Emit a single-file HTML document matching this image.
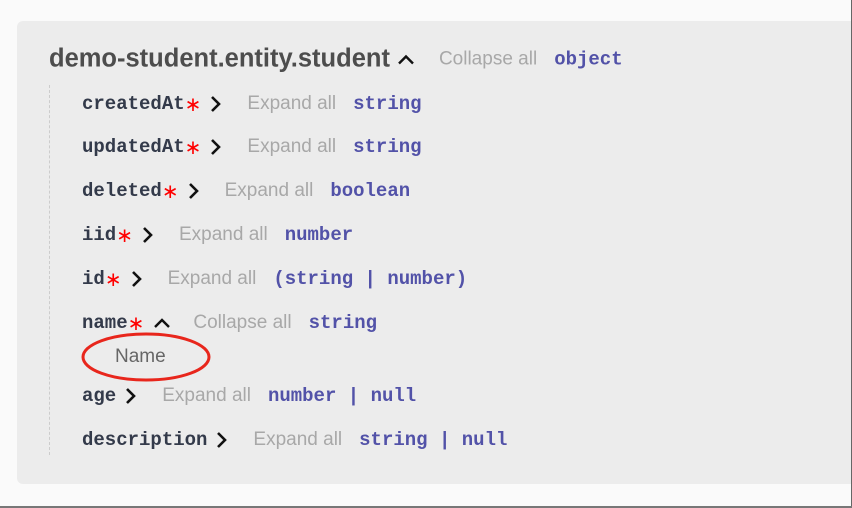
<!DOCTYPE html>
<html><head><style>
body{margin:0;width:852px;height:508px;background:#fafafa;position:relative;overflow:hidden;font-family:"Liberation Sans",sans-serif}
.panel{position:absolute;left:17px;top:21px;width:834px;height:463px;background:#ececec;border-radius:6px 0 0 6px}
.rb{position:absolute;right:0;top:0;width:1px;height:508px;background:#666}
.bb{position:absolute;left:0;bottom:0;width:852px;height:2px;background:#777}
.vl{position:absolute;left:49px;top:85px;height:370px;border-left:1px dashed #ccc}
.row{position:absolute;left:82px;white-space:nowrap;display:flex;align-items:center;height:24px;transform:translateY(-50%);margin-top:1px}
.k{font-family:"Liberation Mono",monospace;font-weight:bold;font-size:19px;color:#333a4a}
.r{color:#f00;font-family:"DejaVu Sans",sans-serif;font-weight:normal;font-size:20px}
.t{font-family:"Liberation Mono",monospace;font-weight:bold;font-size:19px;color:#5252a8}
.g{color:#a8a8a8;font-size:19px;margin:0 17px 0 25px}
.ch{display:inline-block;width:12px;height:18px;margin-left:9px}
.title{position:absolute;left:49px;top:59px;transform:translateY(-50%);font-size:25.5px;font-weight:bold;color:#4d4d4d;display:flex;align-items:center;white-space:nowrap}
</style></head><body>
<div class="panel"></div>
<div class="rb"></div><div class="bb"></div>
<div class="vl"></div>
<div class="title">demo-student.entity.student<svg class="ch" style="width:18px;margin-left:7px" viewBox="0 0 18 18"><path d="M2 13 L9 6 L16 13" fill="none" stroke="#111" stroke-width="2.4"/></svg><span class="g" style="font-weight:normal;margin-left:24px">Collapse all</span><span class="t">object</span></div>

<div class="row" style="top:103px"><span class="k">createdAt</span><span class="r">∗</span><svg class="ch" viewBox="0 0 12 18"><path d="M2 2 L9 9 L2 16" fill="none" stroke="#111" stroke-width="2.6"/></svg><span class="g">Expand all</span><span class="t">string</span></div>
<div class="row" style="top:146px"><span class="k">updatedAt</span><span class="r">∗</span><svg class="ch" viewBox="0 0 12 18"><path d="M2 2 L9 9 L2 16" fill="none" stroke="#111" stroke-width="2.6"/></svg><span class="g">Expand all</span><span class="t">string</span></div>
<div class="row" style="top:190px"><span class="k">deleted</span><span class="r">∗</span><svg class="ch" viewBox="0 0 12 18"><path d="M2 2 L9 9 L2 16" fill="none" stroke="#111" stroke-width="2.6"/></svg><span class="g">Expand all</span><span class="t">boolean</span></div>
<div class="row" style="top:234px"><span class="k">iid</span><span class="r">∗</span><svg class="ch" viewBox="0 0 12 18"><path d="M2 2 L9 9 L2 16" fill="none" stroke="#111" stroke-width="2.6"/></svg><span class="g">Expand all</span><span class="t">number</span></div>
<div class="row" style="top:278px"><span class="k">id</span><span class="r">∗</span><svg class="ch" viewBox="0 0 12 18"><path d="M2 2 L9 9 L2 16" fill="none" stroke="#111" stroke-width="2.6"/></svg><span class="g">Expand all</span><span class="t">(string | number)</span></div>
<div class="row" style="top:322px"><span class="k">name</span><span class="r">∗</span><svg class="ch" style="width:18px" viewBox="0 0 18 18"><path d="M2 13 L9 6 L16 13" fill="none" stroke="#111" stroke-width="2.4"/></svg><span class="g" style="margin-left:22px">Collapse all</span><span class="t">string</span></div>
<div style="position:absolute;left:115px;top:346px;font-size:19px;color:#666">Name</div>
<svg style="position:absolute;left:80px;top:330px" width="134" height="54"><ellipse cx="66" cy="27" rx="63" ry="23" fill="none" stroke="#e8261c" stroke-width="3"/></svg>
<div class="row" style="top:395px"><span class="k">age</span><svg class="ch" viewBox="0 0 12 18"><path d="M2 2 L9 9 L2 16" fill="none" stroke="#111" stroke-width="2.6"/></svg><span class="g">Expand all</span><span class="t">number | null</span></div>
<div class="row" style="top:439px"><span class="k">description</span><svg class="ch" viewBox="0 0 12 18"><path d="M2 2 L9 9 L2 16" fill="none" stroke="#111" stroke-width="2.6"/></svg><span class="g">Expand all</span><span class="t">string | null</span></div>
</body></html>
